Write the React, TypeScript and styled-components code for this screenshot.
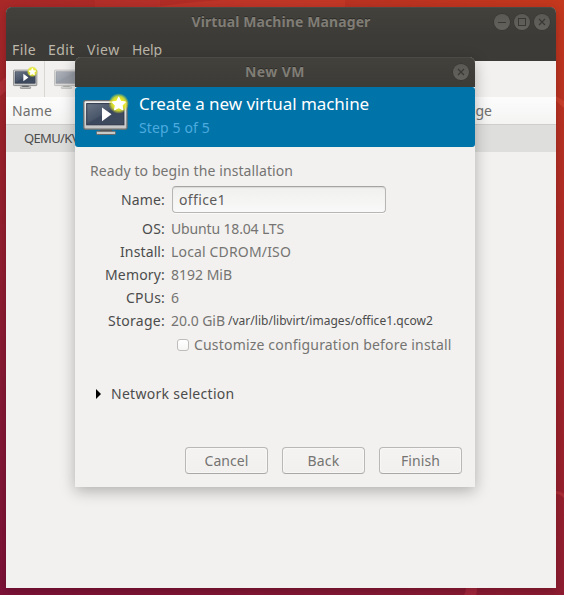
import React from 'react';
import styled, { createGlobalStyle } from 'styled-components';

const GlobalStyle = createGlobalStyle`
  * { box-sizing: border-box; }
  html, body { margin: 0; padding: 0; overflow: hidden; }
  body { font-family: "Noto Sans", "Open Sans", sans-serif; font-size: 14px; color: #4c4c4c; }
`;

const Desktop = styled.div`
  position: relative;
  width: 564px;
  height: 595px;
  padding: 7px 8px 7px 6px;
  overflow: hidden;
  background: linear-gradient(28deg, #7d1238 0%, #861935 22%, #9c222b 52%, #b02c26 76%, #c4381d 100%);
`;

const Wallpaper = styled.svg`
  position: absolute;
  inset: 0;
`;

const Window = styled.div`
  position: relative;
  display: flex;
  flex-direction: column;
  width: 550px;
  height: 581px;
  border-radius: 6px 6px 0 0;
  background: #f2f1ef;
  box-shadow: 0 3px 10px rgba(30, 0, 10, 0.25);
`;

const Text = styled.span<{ $spacing?: number }>`
  display: block;
  white-space: pre;
  letter-spacing: ${(p) => p.$spacing ?? 0}px;
`;

const TitleBar = styled.header`
  display: grid;
  grid-template-columns: 1fr auto 1fr;
  align-items: center;
  flex: none;
  height: 30px;
  padding: 0 6px;
  border-radius: 6px 6px 0 0;
  box-shadow: inset 0 1px 0 #4b4a45;
  background: linear-gradient(#42413c, #3c3b37);
`;

const Title = styled(Text)`
  grid-column: 2;
  padding-bottom: 2px;
  font-weight: 700;
  color: #807d76;
  text-shadow: 0 -1px 0 #2d2c29;
`;

const Controls = styled.div`
  display: flex;
  justify-content: flex-end;
  gap: 4px;
`;

const ControlButton = styled.button`
  display: flex;
  width: 16px;
  height: 16px;
  padding: 0;
  border: 0;
  border-radius: 50%;
  background: linear-gradient(#5b5954, #64625c);
  box-shadow: 0 0 0 0.5px #34332f;
`;

const MenuBar = styled.nav`
  display: flex;
  gap: 12px;
  height: 24px;
  padding-left: 6px;
  background: #3c3b37;
  color: #bdb8ab;
  line-height: 26px;
`;

const MenuItem = styled(Text)<{ $width: number }>`
  width: ${(p) => p.$width}px;
`;

const Toolbar = styled.div`
  display: flex;
  height: 36px;
  background: #f2f1ef;
`;

const ToolButton = styled.div<{ $dim?: boolean }>`
  display: flex;
  width: 39px;
  padding: 5px 0 0 7px;
  border-right: 1px solid #d9d7d4;
  & > svg { flex: none; opacity: ${(p) => (p.$dim ? 0.5 : 1)}; }
  & + & { padding-left: 9px; border-right: 0; }
`;

const ListHeader = styled.div`
  display: flex;
  justify-content: space-between;
  height: 28px;
  padding: 0 64px 0 6px;
  border-bottom: 1px solid #d0cecb;
  background: linear-gradient(#fcfcfc, #f4f4f3);
  color: #706f6e;
  line-height: 28px;
`;

const ListRow = styled.div`
  height: 27px;
  padding-left: 18px;
  background: #dededc;
  font-size: 13px;
  line-height: 27px;
`;

const Dialog = styled.section`
  position: absolute;
  left: 75px;
  top: 57px;
  display: flex;
  flex-direction: column;
  width: 400px;
  height: 430px;
  border-radius: 6px 6px 0 0;
  background: #f2f1ef;
  box-shadow: 0 4px 15px rgba(0, 0, 0, 0.28);
`;

const Banner = styled.div`
  display: flex;
  gap: 8px;
  height: 60px;
  padding: 6px 0 0 8px;
  border-radius: 3px;
  background: #0073a9;
`;

const Heading = styled(Text)`
  margin-top: -1px;
  font-size: 17px;
  line-height: 24px;
  color: #fff;
`;

const StepLabel = styled(Text)`
  line-height: 24px;
  color: #4cabdf;
`;

const Body = styled.main`
  display: flex;
  flex-direction: column;
  flex: 1;
  padding: 12px 13px 13px 15px;
  line-height: 23px;
`;

const Intro = styled(Text)`
  color: #757472;
`;

const NameRow = styled.div`
  display: grid;
  grid-template-columns: 75px 214px;
  column-gap: 7px;
  margin: 4px 0;
  line-height: 27px;
`;

const DetailRow = styled.div`
  display: grid;
  grid-template-columns: 75px auto auto;
  column-gap: 6px;
  justify-content: start;
  height: 23px;
`;

const Label = styled(Text)`
  justify-self: end;
`;

const Value = styled(Text)`
  color: #757472;
`;

const Path = styled(Text)`
  margin-left: -3px;
  font-size: 12px;
`;

const Entry = styled.div`
  height: 27px;
  padding-left: 6px;
  border: 1px solid #b7b6b4;
  border-top-color: #a5a4a2;
  border-radius: 4px;
  background: linear-gradient(#f0f0ee, #f9f9f9);
  box-shadow: inset 0 1px 1px #dcdbd9, 0 1px 0 #fafafa;
  color: #5d5c5b;
  line-height: 25px;
`;

const CheckRow = styled.label`
  display: flex;
  align-items: center;
  gap: 5px;
  height: 23px;
  margin: 1px 0 0 87px;
  color: #757472;
`;

const CheckBox = styled.i`
  width: 12px;
  height: 12px;
  border: 1px solid #bebdbb;
  border-radius: 3px;
  background: linear-gradient(#ffffff, #f6f6f5);
`;

const Expander = styled.div`
  display: flex;
  align-items: center;
  gap: 10px;
  height: 23px;
  margin: 26px 0 0 6px;
`;

const Actions = styled.footer`
  display: flex;
  justify-content: flex-end;
  gap: 14px;
  margin-top: auto;
`;

const ActionButton = styled.button<{ $spacing: number }>`
  width: 83px;
  height: 27px;
  padding: 0;
  border: 1px solid #b9b8b6;
  border-bottom-color: #a9a8a6;
  border-radius: 4px;
  background: linear-gradient(#f4f3f1, #f1f0ee);
  box-shadow: inset 0 0 0 1px #f8f7f6;
  color: #757472;
  font: inherit;
  line-height: 25px;
  letter-spacing: ${(p) => p.$spacing}px;
`;

const CloseGlyph = () => (
  <svg width="16" height="16" viewBox="0 0 16 16" stroke="#393834" strokeWidth="1.2">
    <path d="M5 5L11 11M11 5L5 11" />
  </svg>
);

function Monitor({ size, play, star, id }: { size: number; play?: boolean; star?: boolean; id: string }) {
  return (
    <svg width={size} height={size} viewBox="0 0 48 48">
      <defs>
        <linearGradient id={`${id}-frame`} x2="0" y2="1">
          <stop stopColor="#f2f2f2" />
          <stop offset="1" stopColor="#c4c4c4" />
        </linearGradient>
        <linearGradient id={`${id}-screen`} x2="1" y2="1">
          <stop stopColor="#6b7686" />
          <stop offset="0.45" stopColor="#4a566a" />
          <stop offset="0.5" stopColor="#3c485d" />
          <stop offset="1" stopColor="#414c60" />
        </linearGradient>
        <radialGradient id={`${id}-glow`}>
          <stop offset="0.4" stopColor="#f4f21c" />
          <stop offset="0.7" stopColor="#e2e52a" stopOpacity="0.85" />
          <stop offset="1" stopColor="#d8e030" stopOpacity="0" />
        </radialGradient>
      </defs>
      <path d="M17 36h12v4h-12z" fill="#4d5051" />
      <rect x="13.5" y="38.3" width="19" height="3.2" rx="1" fill="#c9c9c8" stroke="#686868" />
      <rect x="0.8" y="7.7" width="43.2" height="28.5" rx="1.6" fill={`url(#${id}-frame)`} stroke="#6c6d6e" strokeWidth="1.3" />
      <rect x="3.7" y="10.6" width="37.2" height="21.2" fill={`url(#${id}-screen)`} stroke="#2b3447" strokeWidth="1" />
      {play && <path d="M19 14.5L28.5 21.2L19 28.3Z" fill="#fff" />}
      {star && (
        <>
          <circle cx="35.7" cy="10.5" r="10.3" fill={`url(#${id}-glow)`} />
          <path
            d="M35.7 4.2L37.7 8.4L42.2 9L38.9 12.2L39.8 16.7L35.7 14.5L31.6 16.7L32.5 12.2L29.2 9L33.7 8.4Z"
            fill="#fff"
            stroke="#fff"
            strokeWidth="1.2"
            strokeLinejoin="round"
          />
        </>
      )}
    </svg>
  );
}

const details: { label: string; ls: number; value: string; vs: number; path?: string }[] = [
  { label: 'OS:', ls: 0.2, value: 'Ubuntu 18.04 LTS', vs: -0.15 },
  { label: 'Install:', ls: 0.13, value: 'Local CDROM/ISO', vs: 0.16 },
  { label: 'Memory:', ls: 0.17, value: '8192 MiB', vs: 0 },
  { label: 'CPUs:', ls: 0.2, value: '6', vs: 0 },
  { label: 'Storage:', ls: 0.27, value: '20.0 GiB', vs: -0.04, path: '/var/lib/libvirt/images/office1.qcow2' },
];

export default function App() {
  return (
    <Desktop>
      <GlobalStyle />
      <Wallpaper width="564" height="595">
        <path d="M95 0H160V7H95Z" fill="#d04035" opacity=".18" />
        <path d="M155 7Q190 2 220 0H345V7Z" fill="#e04b35" opacity=".25" />
        <path d="M0 82L6 77V91L0 96Z" fill="#bd3844" opacity=".5" />
        <path d="M556 96L564 101V108L556 101Z" fill="#e25a40" opacity=".35" />
        <path d="M556 491Q561 491 564 494V498Q560 494 556 494Z" fill="#c23a40" opacity=".5" />
        <path d="M466 588H477Q477 592 476 595H464Q466 592 466 588Z" fill="#b02c40" opacity=".7" />
      </Wallpaper>
      <Window>
        <TitleBar>
          <Title $spacing={0.1}>Virtual Machine Manager</Title>
          <Controls>
            <ControlButton aria-label="Minimize">
              <svg width="16" height="16" viewBox="0 0 16 16">
                <path d="M4 8.5H12" stroke="#393834" />
              </svg>
            </ControlButton>
            <ControlButton aria-label="Maximize">
              <svg width="16" height="16" viewBox="0 0 16 16">
                <rect x="4.5" y="4.5" width="7" height="7" fill="none" stroke="#393834" />
              </svg>
            </ControlButton>
            <ControlButton aria-label="Close">
              <CloseGlyph />
            </ControlButton>
          </Controls>
        </TitleBar>
        <MenuBar>
          <MenuItem $width={24} $spacing={0.4}>File</MenuItem>
          <MenuItem $width={27} $spacing={0.45}>Edit</MenuItem>
          <MenuItem $width={33} $spacing={0.55}>View</MenuItem>
          <MenuItem $width={30} $spacing={-0.1}>Help</MenuItem>
        </MenuBar>
        <Toolbar>
          <ToolButton><Monitor id="new" size={26} play star /></ToolButton>
          <ToolButton $dim><Monitor id="open" size={26} /></ToolButton>
        </Toolbar>
        <ListHeader>
          <Text $spacing={0.13}>Name</Text>
          <Text>CPU usage</Text>
        </ListHeader>
        <ListRow><Text $spacing={-0.64}>QEMU/KVM</Text></ListRow>
      </Window>
      <Dialog>
        <TitleBar>
          <Title $spacing={0.44}>New VM</Title>
          <Controls>
            <ControlButton aria-label="Close dialog">
              <CloseGlyph />
            </ControlButton>
          </Controls>
        </TitleBar>
        <Banner>
          <Monitor id="banner" size={48} play star />
          <div>
            <Heading $spacing={-0.06}>Create a new virtual machine</Heading>
            <StepLabel $spacing={0.14}>Step 5 of 5</StepLabel>
          </div>
        </Banner>
        <Body>
          <Intro $spacing={0.1}>Ready to begin the installation</Intro>
          <NameRow>
            <Label $spacing={0.15}>Name:</Label>
            <Entry><Text $spacing={0.38}>office1</Text></Entry>
          </NameRow>
          {details.map((d) => (
            <DetailRow key={d.label}>
              <Label $spacing={d.ls}>{d.label}</Label>
              <Value $spacing={d.vs}>{d.value}</Value>
              {d.path && <Path $spacing={0.02}>{d.path}</Path>}
            </DetailRow>
          ))}
          <CheckRow>
            <CheckBox />
            <Text $spacing={0.18}>Customize configuration before install</Text>
          </CheckRow>
          <Expander>
            <svg width="5" height="10" viewBox="0 0 5 10"><path d="M0 0L5 5L0 10Z" fill="#000" /></svg>
            <Text $spacing={0.29}>Network selection</Text>
          </Expander>
          <Actions>
            <ActionButton $spacing={0.07}>Cancel</ActionButton>
            <ActionButton $spacing={0.21}>Back</ActionButton>
            <ActionButton $spacing={0.08}>Finish</ActionButton>
          </Actions>
        </Body>
      </Dialog>
    </Desktop>
  );
}
